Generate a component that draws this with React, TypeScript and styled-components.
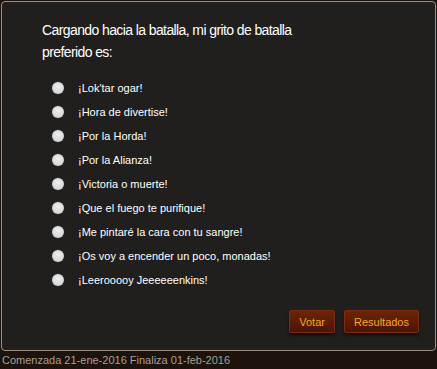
import React, { FC } from "react";
import styled, { createGlobalStyle } from "styled-components";

const GlobalStyle = createGlobalStyle`
  html, body {
    margin: 0;
    padding: 0;
    background: #1c130d;
    font-family: "Liberation Sans", Arial, sans-serif;
  }
`;

const Styled = {
  Page: styled.div`
    width: 437px;
    height: 369px;
    background: #1c130d;
    display: flex;
    flex-direction: column;
  `,
  Panel: styled.section`
    margin: 1px 1px 0 1px;
    height: 350px;
    box-sizing: border-box;
    background: #201f1e;
    border: 1px solid #9a8f80;
    border-radius: 4px;
    padding: 17px 16px 0 40px;
    display: flex;
    flex-direction: column;
  `,
  Question: styled.h2`
    margin: 0;
    width: 280px;
    font-size: 14px;
    font-weight: normal;
    line-height: 22px;
    color: #ffffff;
    letter-spacing: -0.6px;
  `,
  Options: styled.ul`
    list-style: none;
    margin: 13px 0 0 0;
    padding: 0 0 0 10px;
    display: flex;
    flex-direction: column;
  `,
  Option: styled.li`
    height: 24px;
    display: flex;
    align-items: center;
    gap: 14px;
    font-size: 11px;
    color: #ffffff;
  `,
  Radio: styled.span`
    width: 12px;
    height: 12px;
    border-radius: 50%;
    background: radial-gradient(circle at 50% 40%, #f0f0f0 0%, #d8d8d8 60%, #bdbdbd 100%);
    box-shadow: 0 0 1px rgba(255, 255, 255, 0.4);
  `,
  Actions: styled.div`
    display: flex;
    justify-content: flex-end;
    gap: 9px;
    margin-top: 18px;
  `,
  Button: styled.button`
    height: 23px;
    padding: 0 9px;
    border: 1px solid #7b2b10;
    border-radius: 2px;
    background: linear-gradient(#6e2409, #4c1405);
    color: #f5a812;
    font-family: "Liberation Sans", Arial, sans-serif;
    font-size: 11px;
    box-shadow: 0 3px 3px rgba(0, 0, 0, 0.45);
    cursor: pointer;
  `,
  Footer: styled.footer`
    padding: 2px 2px 0;
    font-size: 11px;
    color: #ab9f8b;
    line-height: 14px;
  `,
};

const options = [
  "¡Lok'tar ogar!",
  "¡Hora de divertise!",
  "¡Por la Horda!",
  "¡Por la Alianza!",
  "¡Victoria o muerte!",
  "¡Que el fuego te purifique!",
  "¡Me pintaré la cara con tu sangre!",
  "¡Os voy a encender un poco, monadas!",
  "¡Leerooooy Jeeeeeenkins!",
];

const App: FC = () => {
  return (
    <>
      <GlobalStyle />
      <Styled.Page>
        <Styled.Panel>
          <Styled.Question>
            Cargando hacia la batalla, mi grito de batalla preferido es:
          </Styled.Question>
          <Styled.Options>
            {options.map((o) => (
              <Styled.Option key={o}>
                <Styled.Radio />
                {o}
              </Styled.Option>
            ))}
          </Styled.Options>
          <Styled.Actions>
            <Styled.Button>Votar</Styled.Button>
            <Styled.Button>Resultados</Styled.Button>
          </Styled.Actions>
        </Styled.Panel>
        <Styled.Footer>Comenzada 21-ene-2016 Finaliza 01-feb-2016</Styled.Footer>
      </Styled.Page>
    </>
  );
};

export default App;
